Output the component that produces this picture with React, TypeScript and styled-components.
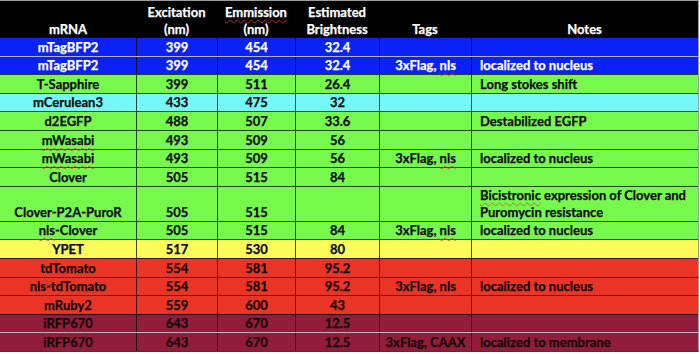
import React from "react";
import styled, { createGlobalStyle } from "styled-components";

const GlobalStyle = createGlobalStyle`
  html, body {
    margin: 0;
    padding: 0;
    background: #ffffff;
  }
  body {
    font-family: Lato, "Liberation Sans", sans-serif;
  }
`;

type Tone = "blue" | "green" | "cyan" | "yellow" | "red" | "maroon";

const toneBg: Record<Tone, string> = {
  blue: "#0a22f6",
  green: "#76f94c",
  cyan: "#76f8f8",
  yellow: "#fbfc5c",
  red: "#ea3526",
  maroon: "#921c3b",
};

const toneFg: Record<Tone, string> = {
  blue: "#ffffff",
  green: "#0b0b0b",
  cyan: "#0b0b0b",
  yellow: "#0b0b0b",
  red: "#140404",
  maroon: "#140406",
};

interface RowData {
  name: string;
  ex: string;
  em: string;
  br: string;
  tags: string;
  notes: string[];
  tone: Tone;
  light?: boolean;
  tall?: boolean;
}

const rows: RowData[] = [
  { name: "mTagBFP2", ex: "399", em: "454", br: "32.4", tags: "", notes: [], tone: "blue" },
  { name: "mTagBFP2", ex: "399", em: "454", br: "32.4", tags: "3xFlag, ~nls~", notes: ["localized to nucleus"], tone: "blue", light: true },
  { name: "T-Sapphire", ex: "399", em: "511", br: "26.4", tags: "", notes: ["Long stokes shift"], tone: "green" },
  { name: "mCerulean3", ex: "433", em: "475", br: "32", tags: "", notes: [], tone: "cyan" },
  { name: "d2EGFP", ex: "488", em: "507", br: "33.6", tags: "", notes: ["Destabilized EGFP"], tone: "green" },
  { name: "~mWasabi~", ex: "493", em: "509", br: "56", tags: "", notes: [], tone: "green" },
  { name: "~mWasabi~", ex: "493", em: "509", br: "56", tags: "3xFlag, ~nls~", notes: ["localized to nucleus"], tone: "green" },
  { name: "Clover", ex: "505", em: "515", br: "84", tags: "", notes: [], tone: "green" },
  { name: "Clover-P2A-PuroR", ex: "505", em: "515", br: "", tags: "", notes: ["~Bicistronic~ expression of Clover and", "Puromycin resistance"], tone: "green", tall: true },
  { name: "~nls~-Clover", ex: "505", em: "515", br: "84", tags: "3xFlag, ~nls~", notes: ["localized to nucleus"], tone: "green" },
  { name: "YPET", ex: "517", em: "530", br: "80", tags: "", notes: [], tone: "yellow" },
  { name: "~tdTomato~", ex: "554", em: "581", br: "95.2", tags: "", notes: [], tone: "red" },
  { name: "~nls-tdTomato~", ex: "554", em: "581", br: "95.2", tags: "3xFlag, ~nls~", notes: ["localized to nucleus"], tone: "red" },
  { name: "mRuby2", ex: "559", em: "600", br: "43", tags: "", notes: [], tone: "red" },
  { name: "iRFP670", ex: "643", em: "670", br: "12.5", tags: "", notes: [], tone: "maroon" },
  { name: "iRFP670", ex: "643", em: "670", br: "12.5", tags: "3xFlag, CAAX", notes: ["localized to membrane"], tone: "maroon", light: true },
];

const columns = "136px 81px 78px 84px 92px 227px";

const Sheet = styled.div`
  width: 698px;
  border-top: 1px solid #9c9c9c;
  border-right: 1px solid #9c9c9c;
  border-bottom: 1px solid #3a3a3a;
  font-family: Lato, "Liberation Sans", sans-serif;
  font-weight: 700;
  font-size: 13px;
  line-height: 16.5px;
  -webkit-text-stroke: 0.25px currentColor;
`;

const HeaderRow = styled.div`
  display: grid;
  grid-template-columns: ${columns};
  height: 36px;
  background: #000000;
  color: #ffffff;
`;

const HeaderCell = styled.div`
  display: flex;
  flex-direction: column;
  justify-content: flex-end;
  align-items: center;
  text-align: center;
`;

const Row = styled.div<{ $tone: Tone; $light?: boolean; $tall?: boolean }>`
  display: grid;
  grid-template-columns: ${columns};
  height: ${(p) => (p.$tall ? "35px" : "18.6px")};
  box-sizing: border-box;
  background: ${(p) => toneBg[p.$tone]};
  color: ${(p) => toneFg[p.$tone]};
  border-top: 1px solid
    ${(p) => (p.$light ? "rgba(215, 215, 225, 0.8)" : "rgba(0, 0, 0, 0.72)")};
`;

const Cell = styled.div<{ $align?: "left" | "center" }>`
  display: flex;
  flex-direction: column;
  justify-content: flex-end;
  align-items: ${(p) => (p.$align === "left" ? "flex-start" : "center")};
  text-align: ${(p) => p.$align ?? "center"};
  padding-left: ${(p) => (p.$align === "left" ? "8px" : "0")};
  padding-bottom: 0.5px;
  & + & {
    border-left: 1px solid rgba(0, 0, 0, 0.72);
  }
`;

const Line = styled.span`
  display: block;
  white-space: nowrap;
`;

const Squiggle = styled.span`
  text-decoration-line: underline;
  text-decoration-style: wavy;
  text-decoration-color: rgba(220, 60, 50, 0.75);
  text-decoration-thickness: 1px;
  text-underline-offset: 2px;
`;

function Rich({ text }: { text: string }) {
  const parts = text.split("~");
  return (
    <>
      {parts.map((part, i) =>
        i % 2 === 1 ? <Squiggle key={i}>{part}</Squiggle> : <React.Fragment key={i}>{part}</React.Fragment>
      )}
    </>
  );
}

const headers: string[][] = [
  ["mRNA"],
  ["Excitation", "(nm)"],
  ["~Emmission~", "(nm)"],
  ["Estimated", "Brightness"],
  ["Tags"],
  ["Notes"],
];

export default function App() {
  return (
    <>
      <GlobalStyle />
      <Sheet>
        <HeaderRow>
          {headers.map((h, i) => (
            <HeaderCell key={i}>
              {h.map((line, j) => (
                <Line key={j}>
                  <Rich text={line} />
                </Line>
              ))}
            </HeaderCell>
          ))}
        </HeaderRow>
        {rows.map((r, i) => (
          <Row key={i} $tone={r.tone} $light={r.light} $tall={r.tall}>
            <Cell>
              <Line>
                <Rich text={r.name} />
              </Line>
            </Cell>
            <Cell>
              <Line>{r.ex}</Line>
            </Cell>
            <Cell>
              <Line>{r.em}</Line>
            </Cell>
            <Cell>
              <Line>{r.br}</Line>
            </Cell>
            <Cell>
              <Line>
                <Rich text={r.tags} />
              </Line>
            </Cell>
            <Cell $align="left">
              {r.notes.map((n, j) => (
                <Line key={j}>
                  <Rich text={n} />
                </Line>
              ))}
            </Cell>
          </Row>
        ))}
      </Sheet>
    </>
  );
}
